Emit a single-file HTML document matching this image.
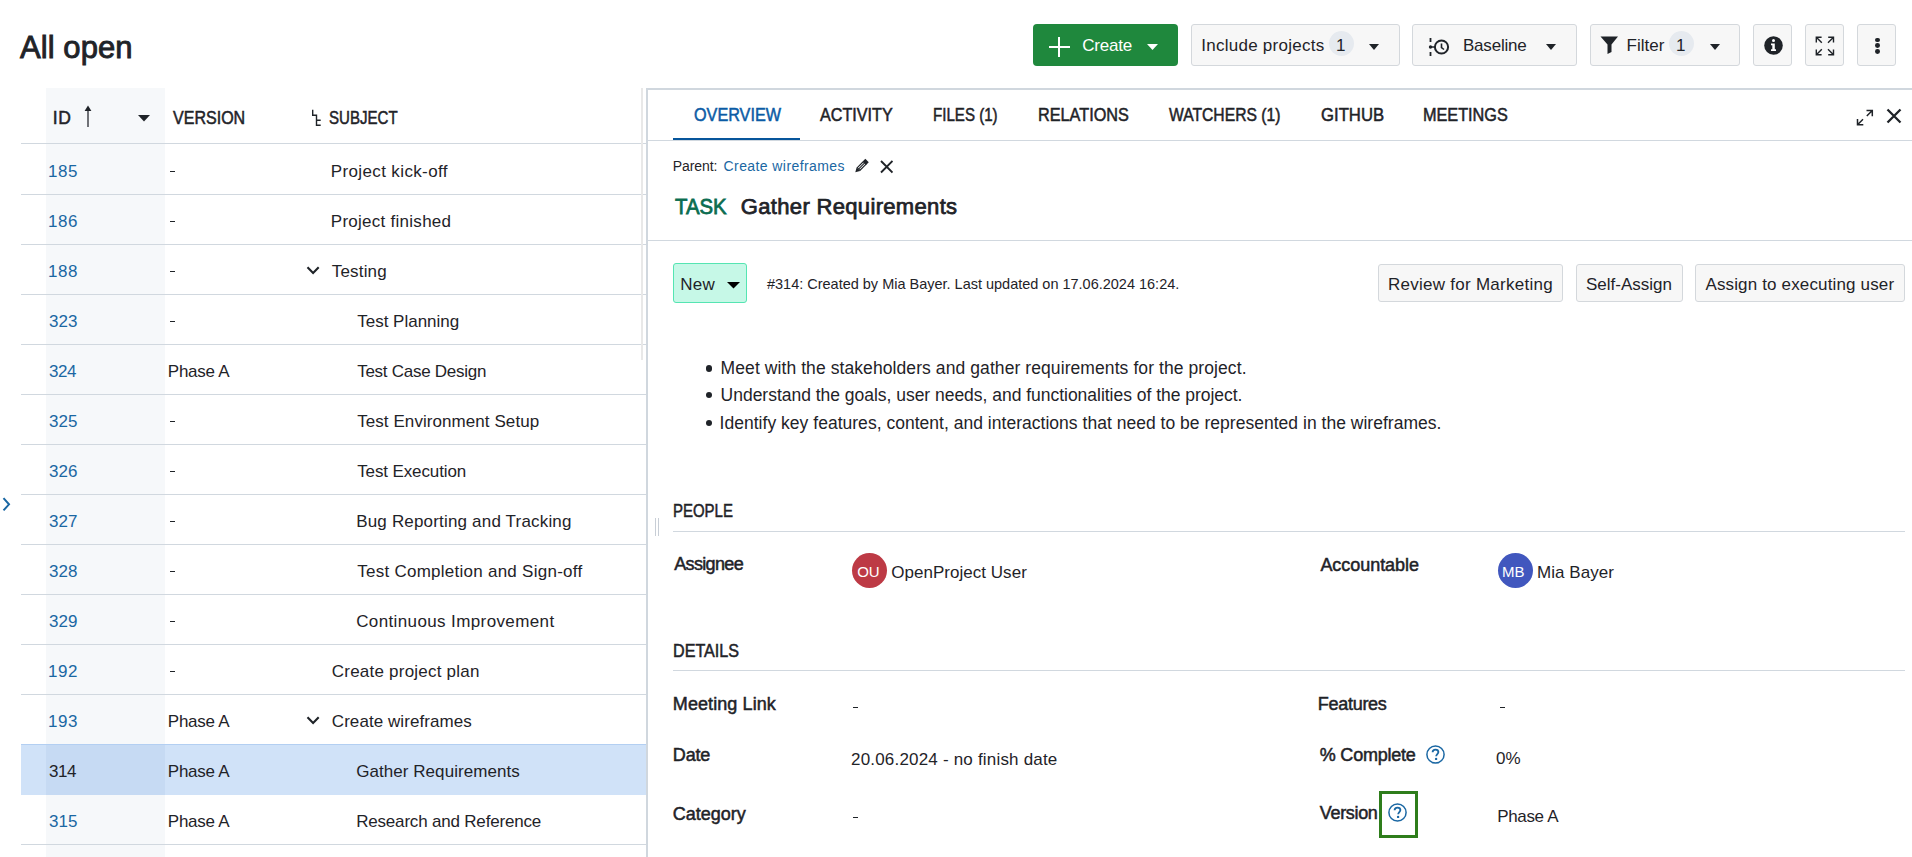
<!DOCTYPE html><html><head><meta charset="utf-8"><style>
html,body{margin:0;padding:0;background:#fff;width:1912px;height:857px;overflow:hidden;position:relative;font-family:'Liberation Sans', sans-serif;color:#1f2328}
.t{position:absolute;white-space:pre;line-height:1;transform-origin:0 0}
</style></head><body>
<div style="position:absolute;left:1033px;top:24px;width:145px;height:42px;background:#1f883d;border-radius:4px;"></div>
<div style="position:absolute;left:1048.5px;top:45.7px;width:21.0px;height:2.5999999999999943px;background:#fff;"></div>
<div style="position:absolute;left:1057.7px;top:37px;width:2.599999999999909px;height:20px;background:#fff;"></div>
<svg style="position:absolute;left:1147px;top:44px" width="11" height="6"><path d="M0 0H11L5.5 6Z" fill="#fff"/></svg>
<div style="position:absolute;left:1191px;top:24px;width:209px;height:42px;background:#f7f7f7;border:1px solid #d4d8dc;border-radius:3px;box-sizing:border-box;"></div>
<div style="position:absolute;left:1329px;top:31px;width:25px;height:25px;background:#e6eaef;border-radius:50%;"></div>
<svg style="position:absolute;left:1369px;top:44px" width="10" height="6"><path d="M0 0H10L5 6Z" fill="#1f2328"/></svg>
<div style="position:absolute;left:1412px;top:24px;width:165px;height:42px;background:#f7f7f7;border:1px solid #d4d8dc;border-radius:3px;box-sizing:border-box;"></div>
<svg style="position:absolute;left:1426px;top:37px" width="26" height="20" viewBox="0 0 26 20">
<path d="M4.5 1V5M4.5 15V19" stroke="#1f2328" stroke-width="1.8"/>
<circle cx="4.5" cy="10" r="1.7" fill="#1f2328"/>
<path d="M5 10H8" stroke="#1f2328" stroke-width="1.5"/>
<circle cx="15.5" cy="10" r="6.6" fill="none" stroke="#1f2328" stroke-width="2"/>
<path d="M15.5 6.5V10.5L18 12.5" fill="none" stroke="#1f2328" stroke-width="1.6"/>
</svg>
<svg style="position:absolute;left:1546px;top:44px" width="10" height="6"><path d="M0 0H10L5 6Z" fill="#1f2328"/></svg>
<div style="position:absolute;left:1590px;top:24px;width:150px;height:42px;background:#f7f7f7;border:1px solid #d4d8dc;border-radius:3px;box-sizing:border-box;"></div>
<svg style="position:absolute;left:1600px;top:36px" width="19" height="18" viewBox="0 0 19 18"><path d="M0.5 0.5H18L11.5 8.5V16L7.5 18V8.5Z" fill="#1f2328"/></svg>
<div style="position:absolute;left:1669px;top:31px;width:25px;height:25px;background:#e6eaef;border-radius:50%;"></div>
<svg style="position:absolute;left:1709.5px;top:44px" width="10" height="6"><path d="M0 0H10L5 6Z" fill="#1f2328"/></svg>
<div style="position:absolute;left:1753px;top:24px;width:39px;height:42px;background:#f7f7f7;border:1px solid #d4d8dc;border-radius:3px;box-sizing:border-box;"></div>
<svg style="position:absolute;left:1763.5px;top:35.5px" width="19" height="19" viewBox="0 0 19 19">
<circle cx="9.5" cy="9.5" r="9.3" fill="#1f2328"/>
<circle cx="9.5" cy="4.6" r="1.5" fill="#fff"/>
<path d="M7 7.5H10.8V13.2H12V15H7V13.2H8.3V9.3H7Z" fill="#fff"/>
</svg>
<div style="position:absolute;left:1805px;top:24px;width:39px;height:42px;background:#f7f7f7;border:1px solid #d4d8dc;border-radius:3px;box-sizing:border-box;"></div>
<svg style="position:absolute;left:1815px;top:35.5px" width="20" height="20" viewBox="0 0 20 20" fill="none" stroke="#1f2328" stroke-width="1.4">
<path d="M1.3 6.6V1.3H6.6M1.3 1.3L6.8 6.8"/><path d="M13.2 1.3H18.5V6.6M18.5 1.3L13 6.8"/><path d="M1.3 13.4V18.7H6.6M1.3 18.7L6.8 13.2"/><path d="M18.5 13.4V18.7H13.2M18.5 18.7L13 13.2"/>
</svg>
<div style="position:absolute;left:1857px;top:24px;width:39px;height:42px;background:#f7f7f7;border:1px solid #d4d8dc;border-radius:3px;box-sizing:border-box;"></div>
<div style="position:absolute;left:1875.1px;top:37.5px;width:4.8px;height:4.8px;border-radius:50%;background:#1f2328"></div>
<div style="position:absolute;left:1875.1px;top:43.4px;width:4.8px;height:4.8px;border-radius:50%;background:#1f2328"></div>
<div style="position:absolute;left:1875.1px;top:49.2px;width:4.8px;height:4.8px;border-radius:50%;background:#1f2328"></div>
<div style="position:absolute;left:46px;top:88px;width:119px;height:769px;background:#f6f8fa;"></div>
<svg style="position:absolute;left:84px;top:105px" width="8" height="22" viewBox="0 0 8 22"><path d="M4 2V22" stroke="#1f2328" stroke-width="1.25"/><path d="M0.6 6L4 0.5L7.4 6Z" fill="#1f2328"/></svg>
<svg style="position:absolute;left:138px;top:114.5px" width="12" height="7"><path d="M0 0H12L6 6.5Z" fill="#1f2328"/></svg>
<svg style="position:absolute;left:311px;top:109px" width="11" height="17" viewBox="0 0 11 17" fill="none" stroke="#1f2328" stroke-width="1.4"><path d="M1.7 0.8V6.3H5.5V16.2H9.7M5.5 11.3H9.7"/></svg>
<div style="position:absolute;left:21px;top:143px;width:625px;height:1px;background:#d1d8df;"></div>
<div style="position:absolute;left:21px;top:194px;width:625px;height:1px;background:#d1d8df;"></div>
<div style="position:absolute;left:21px;top:244px;width:625px;height:1px;background:#d1d8df;"></div>
<div style="position:absolute;left:21px;top:294px;width:625px;height:1px;background:#d1d8df;"></div>
<div style="position:absolute;left:21px;top:344px;width:625px;height:1px;background:#d1d8df;"></div>
<div style="position:absolute;left:21px;top:394px;width:625px;height:1px;background:#d1d8df;"></div>
<div style="position:absolute;left:21px;top:444px;width:625px;height:1px;background:#d1d8df;"></div>
<div style="position:absolute;left:21px;top:494px;width:625px;height:1px;background:#d1d8df;"></div>
<div style="position:absolute;left:21px;top:544px;width:625px;height:1px;background:#d1d8df;"></div>
<div style="position:absolute;left:21px;top:594px;width:625px;height:1px;background:#d1d8df;"></div>
<div style="position:absolute;left:21px;top:644px;width:625px;height:1px;background:#d1d8df;"></div>
<div style="position:absolute;left:21px;top:694px;width:625px;height:1px;background:#d1d8df;"></div>
<div style="position:absolute;left:21px;top:744px;width:625px;height:1px;background:#d1d8df;"></div>
<div style="position:absolute;left:21px;top:794px;width:625px;height:1px;background:#d1d8df;"></div>
<div style="position:absolute;left:21px;top:844px;width:625px;height:1px;background:#d1d8df;"></div>
<div style="position:absolute;left:169.5px;top:171px;width:5.5px;height:1px;background:#1f2328;"></div>
<div style="position:absolute;left:169.5px;top:221px;width:5.5px;height:1px;background:#1f2328;"></div>
<div style="position:absolute;left:169.5px;top:271px;width:5.5px;height:1px;background:#1f2328;"></div>
<svg style="position:absolute;left:305.5px;top:265.8px" width="14" height="9" viewBox="0 0 14 9"><path d="M1.5 1.3L7.1 7L12.7 1.3" fill="none" stroke="#1f2328" stroke-width="2.1"/></svg>
<div style="position:absolute;left:169.5px;top:321px;width:5.5px;height:1px;background:#1f2328;"></div>
<div style="position:absolute;left:169.5px;top:421px;width:5.5px;height:1px;background:#1f2328;"></div>
<div style="position:absolute;left:169.5px;top:471px;width:5.5px;height:1px;background:#1f2328;"></div>
<div style="position:absolute;left:169.5px;top:521px;width:5.5px;height:1px;background:#1f2328;"></div>
<div style="position:absolute;left:169.5px;top:571px;width:5.5px;height:1px;background:#1f2328;"></div>
<div style="position:absolute;left:169.5px;top:621px;width:5.5px;height:1px;background:#1f2328;"></div>
<div style="position:absolute;left:169.5px;top:671px;width:5.5px;height:1px;background:#1f2328;"></div>
<svg style="position:absolute;left:305.5px;top:715.8px" width="14" height="9" viewBox="0 0 14 9"><path d="M1.5 1.3L7.1 7L12.7 1.3" fill="none" stroke="#1f2328" stroke-width="2.1"/></svg>
<div style="position:absolute;left:21px;top:744px;width:625px;height:51px;background:#d0e2f8;"></div>
<div style="position:absolute;left:46px;top:744px;width:119px;height:51px;background:#c6daf3;"></div>
<div style="position:absolute;left:21px;top:744px;width:625px;height:1px;background:#b3cff2;"></div>
<div style="position:absolute;left:641px;top:88px;width:2px;height:272px;background:#e8e8e8;"></div>
<svg style="position:absolute;left:0.5px;top:497px" width="10" height="15" viewBox="0 0 10 15"><path d="M2.5 1.2L8 7.3L2.5 13.4" fill="none" stroke="#1a67a3" stroke-width="2"/></svg>
<div style="position:absolute;left:646px;top:88px;width:1266px;height:2px;background:#d0d7de;"></div>
<div style="position:absolute;left:646px;top:88px;width:2px;height:769px;background:#d0d7de;"></div>
<div style="position:absolute;left:655px;top:518px;width:1px;height:18px;background:#c8ced6;"></div>
<div style="position:absolute;left:658px;top:518px;width:1px;height:18px;background:#c8ced6;"></div>
<div style="position:absolute;left:648px;top:140px;width:1264px;height:1px;background:#d1d8df;"></div>
<div style="position:absolute;left:673px;top:138px;width:127px;height:2px;background:#06559b;"></div>
<svg style="position:absolute;left:1855px;top:108px" width="20" height="20" viewBox="0 0 20 20" fill="none" stroke="#1f2328" stroke-width="1.5">
<path d="M2.5 11V16.8H8.3M2.5 16.8L8 11.3"/><path d="M11.5 2.5H17.3V8.3M17.3 2.5L11.8 8"/>
</svg>
<svg style="position:absolute;left:1886px;top:108px" width="16" height="16" viewBox="0 0 16 16"><path d="M1.5 1.5L14.5 14.5M14.5 1.5L1.5 14.5" stroke="#1f2328" stroke-width="2.3"/></svg>
<svg style="position:absolute;left:850px;top:155px" width="22" height="22" viewBox="0 0 22 22">
<g transform="translate(5.3,17.3) rotate(-45)">
<path d="M0 0L4.2 -2.4V2.4Z" fill="#1f2328"/>
<rect x="4.6" y="-1.9" width="8.6" height="3.8" fill="none" stroke="#1f2328" stroke-width="1.1"/>
<path d="M4.6 0H13.2" stroke="#1f2328" stroke-width="1"/>
<rect x="13.2" y="-2.4" width="3.4" height="4.8" fill="#1f2328"/>
</g></svg>
<svg style="position:absolute;left:879.5px;top:160px" width="13.5" height="13.5" viewBox="0 0 13.5 13.5"><path d="M1 1L12.5 12.5M12.5 1L1 12.5" stroke="#1f2328" stroke-width="1.9"/></svg>
<div style="position:absolute;left:648px;top:240px;width:1264px;height:1px;background:#d1d8df;"></div>
<div style="position:absolute;left:673px;top:263px;width:74px;height:40px;background:#c6f8e7;border:1.5px solid #55e5b2;border-radius:3px;box-sizing:border-box;"></div>
<svg style="position:absolute;left:727px;top:282px" width="13" height="6.5"><path d="M0 0H13L6.5 6.5Z" fill="#000"/></svg>
<div style="position:absolute;left:1378px;top:264px;width:185px;height:38px;background:#f7f7f7;border:1px solid #d4d8dc;border-radius:3px;box-sizing:border-box;"></div>
<div style="position:absolute;left:1576px;top:264px;width:107px;height:38px;background:#f7f7f7;border:1px solid #d4d8dc;border-radius:3px;box-sizing:border-box;"></div>
<div style="position:absolute;left:1695px;top:264px;width:210px;height:38px;background:#f7f7f7;border:1px solid #d4d8dc;border-radius:3px;box-sizing:border-box;"></div>
<div style="position:absolute;left:705.6px;top:365.2px;width:6.8px;height:6.8px;border-radius:50%;background:#1f2328"></div>
<div style="position:absolute;left:705.6px;top:391.7px;width:6.8px;height:6.8px;border-radius:50%;background:#1f2328"></div>
<div style="position:absolute;left:705.6px;top:419.7px;width:6.8px;height:6.8px;border-radius:50%;background:#1f2328"></div>
<div style="position:absolute;left:673px;top:531px;width:1232px;height:1px;background:#d1d8df;"></div>
<div style="position:absolute;left:852px;top:553px;width:35px;height:35px;background:#bd3a45;border-radius:50%;"></div>
<div style="position:absolute;left:1498px;top:553px;width:35px;height:35px;background:#4157be;border-radius:50%;"></div>
<div style="position:absolute;left:673px;top:670px;width:1232px;height:1px;background:#d1d8df;"></div>
<div style="position:absolute;left:853px;top:707px;width:5.2999999999999545px;height:1px;background:#1f2328;"></div>
<div style="position:absolute;left:853px;top:817px;width:5.2999999999999545px;height:1px;background:#1f2328;"></div>
<div style="position:absolute;left:1499.6px;top:707px;width:5.400000000000091px;height:1px;background:#1f2328;"></div>
<svg style="position:absolute;left:1425.5px;top:744.7px" width="19" height="19" viewBox="0 0 19 19">
<circle cx="9.5" cy="9.5" r="8.6" fill="none" stroke="#1a67a3" stroke-width="1.5"/>
<path d="M6.6 7.3C6.6 5.6 7.9 4.6 9.5 4.6C11.1 4.6 12.4 5.6 12.4 7.1C12.4 8.9 10.2 9.2 10.2 11.2" fill="none" stroke="#1a67a3" stroke-width="1.8"/>
<circle cx="10.1" cy="13.9" r="1.2" fill="#1a67a3"/>
</svg>
<div style="position:absolute;left:1379px;top:791px;width:39px;height:47px;border:3px solid #2e7d1b;box-sizing:border-box;"></div>
<svg style="position:absolute;left:1388.2px;top:802.5px" width="19" height="19" viewBox="0 0 19 19">
<circle cx="9.5" cy="9.5" r="8.6" fill="none" stroke="#1a67a3" stroke-width="1.5"/>
<path d="M6.6 7.3C6.6 5.6 7.9 4.6 9.5 4.6C11.1 4.6 12.4 5.6 12.4 7.1C12.4 8.9 10.2 9.2 10.2 11.2" fill="none" stroke="#1a67a3" stroke-width="1.8"/>
<circle cx="10.1" cy="13.9" r="1.2" fill="#1a67a3"/>
</svg>
<div class="t" style="left:20.00px;top:32.2px;font-size:31px;color:#1f2328;letter-spacing:0.071px;-webkit-text-stroke:0.9px currentColor;">All open</div>
<div class="t" style="left:1082.20px;top:37.4px;font-size:17px;color:#fff;letter-spacing:-0.200px;">Create</div>
<div class="t" style="left:1201.20px;top:37.2px;font-size:17px;color:#1f2328;letter-spacing:0.267px;">Include projects</div>
<div class="t" style="left:1336.00px;top:37.2px;font-size:17px;color:#1f2328;">1</div>
<div class="t" style="left:1463.00px;top:37.4px;font-size:17px;color:#1f2328;letter-spacing:-0.214px;">Baseline</div>
<div class="t" style="left:1626.60px;top:37.4px;font-size:17px;color:#1f2328;">Filter</div>
<div class="t" style="left:1676.00px;top:37.2px;font-size:17px;color:#1f2328;">1</div>
<div class="t" style="left:52.80px;top:109.6px;font-size:17.5px;color:#1f2328;letter-spacing:0.500px;-webkit-text-stroke:0.5px currentColor;">ID</div>
<div class="t" style="left:173.00px;top:109.6px;font-size:17.5px;color:#1f2328;transform:scaleX(0.9167);-webkit-text-stroke:0.5px currentColor;">VERSION</div>
<div class="t" style="left:329.20px;top:109.6px;font-size:17.5px;color:#1f2328;transform:scaleX(0.8608);-webkit-text-stroke:0.5px currentColor;">SUBJECT</div>
<div class="t" style="left:48.00px;top:163.0px;font-size:17px;color:#1a67a3;letter-spacing:0.500px;">185</div>
<div class="t" style="left:330.80px;top:163.0px;font-size:17px;color:#1f2328;letter-spacing:0.367px;">Project kick-off</div>
<div class="t" style="left:48.00px;top:213.0px;font-size:17px;color:#1a67a3;letter-spacing:0.500px;">186</div>
<div class="t" style="left:330.80px;top:213.0px;font-size:17px;color:#1f2328;letter-spacing:0.267px;">Project finished</div>
<div class="t" style="left:48.00px;top:263.0px;font-size:17px;color:#1a67a3;letter-spacing:0.500px;">188</div>
<div class="t" style="left:331.80px;top:263.0px;font-size:17px;color:#1f2328;letter-spacing:0.167px;">Testing</div>
<div class="t" style="left:49.00px;top:313.0px;font-size:17px;color:#1a67a3;">323</div>
<div class="t" style="left:357.20px;top:313.0px;font-size:17px;color:#1f2328;letter-spacing:0.000px;">Test Planning</div>
<div class="t" style="left:49.00px;top:363.0px;font-size:17px;color:#1a67a3;letter-spacing:-0.500px;">324</div>
<div class="t" style="left:167.80px;top:363.0px;font-size:17px;color:#1f2328;letter-spacing:-0.250px;">Phase A</div>
<div class="t" style="left:357.20px;top:363.0px;font-size:17px;color:#1f2328;letter-spacing:-0.267px;">Test Case Design</div>
<div class="t" style="left:49.00px;top:413.0px;font-size:17px;color:#1a67a3;">325</div>
<div class="t" style="left:357.20px;top:413.0px;font-size:17px;color:#1f2328;letter-spacing:0.071px;">Test Environment Setup</div>
<div class="t" style="left:49.00px;top:463.0px;font-size:17px;color:#1a67a3;">326</div>
<div class="t" style="left:357.20px;top:463.0px;font-size:17px;color:#1f2328;letter-spacing:-0.115px;">Test Execution</div>
<div class="t" style="left:49.00px;top:513.0px;font-size:17px;color:#1a67a3;">327</div>
<div class="t" style="left:356.20px;top:513.0px;font-size:17px;color:#1f2328;letter-spacing:0.180px;">Bug Reporting and Tracking</div>
<div class="t" style="left:49.00px;top:563.0px;font-size:17px;color:#1a67a3;">328</div>
<div class="t" style="left:357.20px;top:563.0px;font-size:17px;color:#1f2328;letter-spacing:0.259px;">Test Completion and Sign-off</div>
<div class="t" style="left:49.00px;top:613.0px;font-size:17px;color:#1a67a3;">329</div>
<div class="t" style="left:356.20px;top:613.0px;font-size:17px;color:#1f2328;letter-spacing:0.381px;">Continuous Improvement</div>
<div class="t" style="left:48.00px;top:663.0px;font-size:17px;color:#1a67a3;letter-spacing:0.500px;">192</div>
<div class="t" style="left:331.80px;top:663.0px;font-size:17px;color:#1f2328;letter-spacing:0.222px;">Create project plan</div>
<div class="t" style="left:48.00px;top:713.0px;font-size:17px;color:#1a67a3;letter-spacing:0.500px;">193</div>
<div class="t" style="left:167.80px;top:713.0px;font-size:17px;color:#1f2328;letter-spacing:-0.250px;">Phase A</div>
<div class="t" style="left:331.80px;top:713.0px;font-size:17px;color:#1f2328;letter-spacing:0.062px;">Create wireframes</div>
<div class="t" style="left:49.00px;top:763.0px;font-size:17px;color:#1f2328;letter-spacing:-0.500px;">314</div>
<div class="t" style="left:167.80px;top:763.0px;font-size:17px;color:#1f2328;letter-spacing:-0.250px;">Phase A</div>
<div class="t" style="left:356.20px;top:763.0px;font-size:17px;color:#1f2328;letter-spacing:0.056px;">Gather Requirements</div>
<div class="t" style="left:49.00px;top:813.0px;font-size:17px;color:#1a67a3;">315</div>
<div class="t" style="left:167.80px;top:813.0px;font-size:17px;color:#1f2328;letter-spacing:-0.250px;">Phase A</div>
<div class="t" style="left:356.20px;top:813.0px;font-size:17px;color:#1f2328;letter-spacing:-0.190px;">Research and Reference</div>
<div class="t" style="left:694.00px;top:106.8px;font-size:17.5px;color:#0b5ba5;transform:scaleX(0.9255);-webkit-text-stroke:0.5px currentColor;">OVERVIEW</div>
<div class="t" style="left:820.20px;top:106.8px;font-size:17.5px;color:#1f2328;transform:scaleX(0.9233);-webkit-text-stroke:0.5px currentColor;">ACTIVITY</div>
<div class="t" style="left:933.00px;top:106.8px;font-size:17.5px;color:#1f2328;transform:scaleX(0.8631);-webkit-text-stroke:0.5px currentColor;">FILES (1)</div>
<div class="t" style="left:1038.00px;top:106.8px;font-size:17.5px;color:#1f2328;transform:scaleX(0.9278);-webkit-text-stroke:0.5px currentColor;">RELATIONS</div>
<div class="t" style="left:1168.80px;top:106.8px;font-size:17.5px;color:#1f2328;transform:scaleX(0.8952);-webkit-text-stroke:0.5px currentColor;">WATCHERS (1)</div>
<div class="t" style="left:1321.00px;top:106.8px;font-size:17.5px;color:#1f2328;transform:scaleX(0.9545);-webkit-text-stroke:0.5px currentColor;">GITHUB</div>
<div class="t" style="left:1423.00px;top:106.8px;font-size:17.5px;color:#1f2328;transform:scaleX(0.9278);-webkit-text-stroke:0.5px currentColor;">MEETINGS</div>
<div class="t" style="left:672.80px;top:158.8px;font-size:14px;color:#1f2328;letter-spacing:-0.083px;">Parent:</div>
<div class="t" style="left:723.60px;top:158.8px;font-size:14px;color:#1a67a3;letter-spacing:0.406px;">Create wireframes</div>
<div class="t" style="left:674.80px;top:195.8px;font-size:22.5px;color:#0b6d50;transform:scaleX(0.9055);-webkit-text-stroke:0.8px currentColor;">TASK</div>
<div class="t" style="left:740.80px;top:196.0px;font-size:22px;color:#1f2328;letter-spacing:0.333px;-webkit-text-stroke:0.75px currentColor;">Gather Requirements</div>
<div class="t" style="left:680.20px;top:275.6px;font-size:17px;color:#1f2328;letter-spacing:0.250px;">New</div>
<div class="t" style="left:767.00px;top:277.2px;font-size:14.5px;color:#1f2328;letter-spacing:-0.008px;">#314: Created by Mia Bayer. Last updated on 17.06.2024 16:24.</div>
<div class="t" style="left:1388.00px;top:276.2px;font-size:17px;color:#1f2328;letter-spacing:0.263px;">Review for Marketing</div>
<div class="t" style="left:1586.00px;top:276.2px;font-size:17px;color:#1f2328;letter-spacing:-0.000px;">Self-Assign</div>
<div class="t" style="left:1705.40px;top:276.2px;font-size:17px;color:#1f2328;letter-spacing:0.152px;">Assign to executing user</div>
<div class="t" style="left:720.60px;top:360.2px;font-size:17.5px;color:#1f2328;letter-spacing:0.083px;">Meet with the stakeholders and gather requirements for the project.</div>
<div class="t" style="left:720.60px;top:386.7px;font-size:17.5px;color:#1f2328;letter-spacing:-0.022px;">Understand the goals, user needs, and functionalities of the project.</div>
<div class="t" style="left:719.60px;top:414.7px;font-size:17.5px;color:#1f2328;letter-spacing:0.021px;">Identify key features, content, and interactions that need to be represented in the wireframes.</div>
<div class="t" style="left:673.20px;top:502.6px;font-size:17.5px;color:#1f2328;transform:scaleX(0.8551);-webkit-text-stroke:0.5px currentColor;">PEOPLE</div>
<div class="t" style="left:674.20px;top:555.4px;font-size:18px;color:#1f2328;letter-spacing:-0.643px;-webkit-text-stroke:0.5px currentColor;">Assignee</div>
<div class="t" style="left:857.20px;top:563.5px;font-size:15px;color:#fff;">OU</div>
<div class="t" style="left:891.20px;top:563.5px;font-size:17px;color:#1f2328;letter-spacing:0.033px;">OpenProject User</div>
<div class="t" style="left:1320.40px;top:555.7px;font-size:18px;color:#1f2328;letter-spacing:-0.050px;-webkit-text-stroke:0.5px currentColor;">Accountable</div>
<div class="t" style="left:1502.00px;top:563.5px;font-size:15px;color:#fff;">MB</div>
<div class="t" style="left:1537.00px;top:563.6px;font-size:17px;color:#1f2328;letter-spacing:0.062px;">Mia Bayer</div>
<div class="t" style="left:672.80px;top:642.8px;font-size:17.5px;color:#1f2328;transform:scaleX(0.9215);-webkit-text-stroke:0.5px currentColor;">DETAILS</div>
<div class="t" style="left:672.80px;top:694.9px;font-size:18px;color:#1f2328;letter-spacing:0.091px;-webkit-text-stroke:0.5px currentColor;">Meeting Link</div>
<div class="t" style="left:672.80px;top:746.4px;font-size:18px;color:#1f2328;letter-spacing:-0.167px;-webkit-text-stroke:0.5px currentColor;">Date</div>
<div class="t" style="left:851.00px;top:750.6px;font-size:17px;color:#1f2328;letter-spacing:0.192px;">20.06.2024 - no finish date</div>
<div class="t" style="left:672.80px;top:804.8px;font-size:18px;color:#1f2328;letter-spacing:0.000px;-webkit-text-stroke:0.5px currentColor;">Category</div>
<div class="t" style="left:1317.80px;top:694.9px;font-size:18px;color:#1f2328;letter-spacing:-0.286px;-webkit-text-stroke:0.5px currentColor;">Features</div>
<div class="t" style="left:1319.80px;top:745.9px;font-size:18px;color:#1f2328;letter-spacing:-0.222px;-webkit-text-stroke:0.5px currentColor;">% Complete</div>
<div class="t" style="left:1496.00px;top:749.9px;font-size:17px;color:#1f2328;">0%</div>
<div class="t" style="left:1319.80px;top:803.9px;font-size:18px;color:#1f2328;letter-spacing:-0.333px;-webkit-text-stroke:0.5px currentColor;">Version</div>
<div class="t" style="left:1497.20px;top:808.0px;font-size:17px;color:#1f2328;letter-spacing:-0.333px;">Phase A</div>
</body></html>
